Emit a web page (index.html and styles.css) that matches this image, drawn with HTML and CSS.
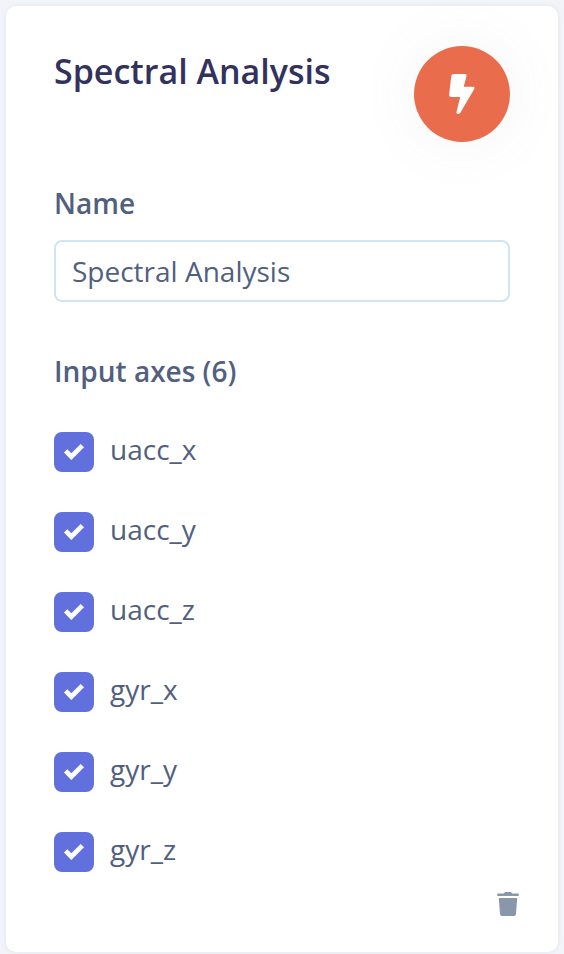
FILE: index.html
```html
<!DOCTYPE html>
<html lang="en">
<head>
<meta charset="utf-8">
<title>Spectral Analysis</title>
<link rel="stylesheet" href="styles.css">
</head>
<body>
<main class="card">
  <header class="head">
    <h1>Spectral Analysis</h1>
    <div class="badge"><svg width="26" height="40" viewBox="0 0 26 40"><path d="M4.500 0H16q2 0 1.500 2L14.700 12.800H24q2.200 0 1.200 2.200L11.500 38.500q-1 1.500-2.500 1.500-1.800 0-1.500-2L11.200 23H2q-2 0-1.900-2L2.300 2q.2-2 2.200-2z" fill="#fff"/></svg></div>
  </header>
  <label class="label" for="name">Name</label>
  <input class="field" id="name" type="text" value="Spectral Analysis">
  <h2 class="label axes-title">Input axes (6)</h2>
  <ul class="axes">
    <li><span class="box"><svg width="20" height="16" viewBox="0 0 20 16"><path d="M0 8.600 3.300 5.300 7.300 9.200 16.700 0 20 3.300 7.300 16z"/></svg></span><span class="axis">uacc_x</span></li>
    <li><span class="box"><svg width="20" height="16" viewBox="0 0 20 16"><path d="M0 8.600 3.300 5.300 7.300 9.200 16.700 0 20 3.300 7.300 16z"/></svg></span><span class="axis">uacc_y</span></li>
    <li><span class="box"><svg width="20" height="16" viewBox="0 0 20 16"><path d="M0 8.600 3.300 5.300 7.300 9.200 16.700 0 20 3.300 7.300 16z"/></svg></span><span class="axis">uacc_z</span></li>
    <li><span class="box"><svg width="20" height="16" viewBox="0 0 20 16"><path d="M0 8.600 3.300 5.300 7.300 9.200 16.700 0 20 3.300 7.300 16z"/></svg></span><span class="axis">gyr_x</span></li>
    <li><span class="box"><svg width="20" height="16" viewBox="0 0 20 16"><path d="M0 8.600 3.300 5.300 7.300 9.200 16.700 0 20 3.300 7.300 16z"/></svg></span><span class="axis">gyr_y</span></li>
    <li><span class="box"><svg width="20" height="16" viewBox="0 0 20 16"><path d="M0 8.600 3.300 5.300 7.300 9.200 16.700 0 20 3.300 7.300 16z"/></svg></span><span class="axis">gyr_z</span></li>
  </ul>
  <footer class="foot"><svg width="22" height="24" viewBox="0 0 22 24"><path d="M.8 1.500h6L8 0h6l1.200 1.500h6q.5 0 .5.500v2H.3V2q0-.5.500-.5zM1.800 6h18.400l-1.200 16q-.2 2-2 2H5q-1.800 0-2-2z" fill="#8898aa"/></svg></footer>
</main>
</body>
</html>
```
FILE: styles.css
```css
* { box-sizing: border-box; }
body {
  margin: 0;
  padding: 6px;
  height: 954px;
  overflow: hidden;
  background: #f3f4fa;
  font-family: "Open Sans", sans-serif;
  color: #525f7f;
}
.card {
  height: 946px;
  padding: 40px 48px 0;
  background: #fff;
  border-radius: 10px;
  box-shadow: 0 0 4px rgba(136, 140, 160, .16);
}
.head { display: flex; justify-content: space-between; height: 136px; }
h1 {
  margin: 0;
  font-size: 34px;
  line-height: 50px;
  font-weight: 600;
  color: #32325d;
}
.badge {
  display: flex;
  align-items: center;
  justify-content: center;
  width: 96px;
  height: 96px;
  border-radius: 50%;
  background: #e96d4c;
  box-shadow: 0 0 56px rgba(136, 152, 170, .1);
}
.label {
  display: block;
  margin: 0;
  font-size: 28px;
  line-height: 42px;
  font-weight: 600;
}
.field {
  display: block;
  width: 100%;
  height: 62px;
  margin: 16px 0 48px;
  padding: 0 16px;
  border: 2px solid #d1e4f2;
  border-radius: 8px;
  background: #fff;
  font: 28px "Open Sans", sans-serif;
  color: #525f7f;
}
.axes { list-style: none; margin: 40px 0 0; padding: 0; display: grid; gap: 40px; }
.axes li { display: flex; gap: 16px; height: 40px; }
.box {
  display: flex;
  align-items: center;
  justify-content: center;
  width: 40px;
  height: 40px;
  border-radius: 8px;
  background: #6270de;
}
.box path { fill: #fff; }
.axis { font-size: 28px; line-height: 34px; }
.foot { display: flex; justify-content: flex-end; margin: 20px -9px 0 0; }
```
